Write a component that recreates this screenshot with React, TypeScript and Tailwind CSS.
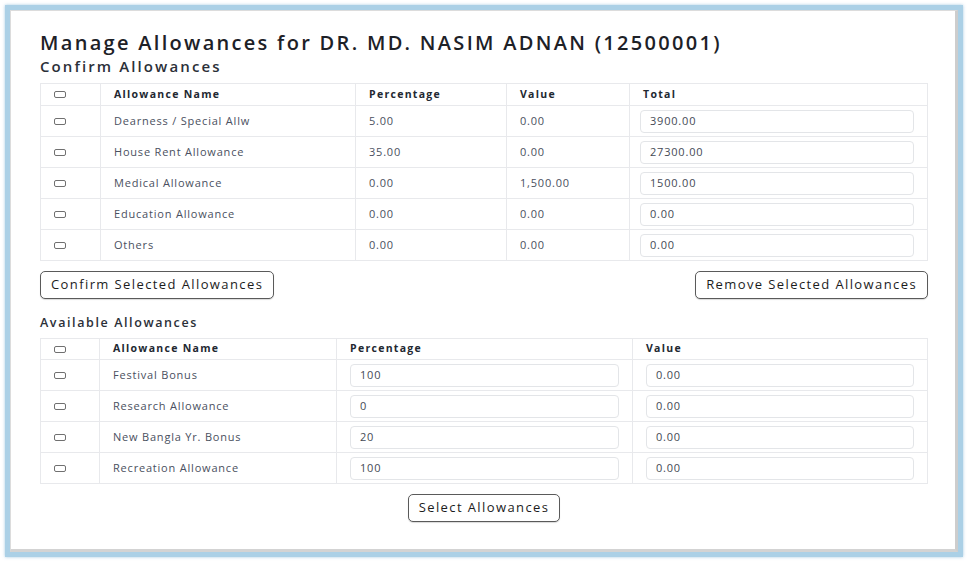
import React from 'react';

type Confirmed = { name: string; pct: string; value: string; total: string };
type Available = { name: string; pct: string; value: string };

const confirmed: Confirmed[] = [
  { name: 'Dearness / Special Allw', pct: '5.00', value: '0.00', total: '3900.00' },
  { name: 'House Rent Allowance', pct: '35.00', value: '0.00', total: '27300.00' },
  { name: 'Medical Allowance', pct: '0.00', value: '1,500.00', total: '1500.00' },
  { name: 'Education Allowance', pct: '0.00', value: '0.00', total: '0.00' },
  { name: 'Others', pct: '0.00', value: '0.00', total: '0.00' },
];

const available: Available[] = [
  { name: 'Festival Bonus', pct: '100', value: '0.00' },
  { name: 'Research Allowance', pct: '0', value: '0.00' },
  { name: 'New Bangla Yr. Bonus', pct: '20', value: '0.00' },
  { name: 'Recreation Allowance', pct: '100', value: '0.00' },
];

// 小さい横長のチェックボックス
const Check = () => (
  <div className="w-[12px] h-[7px] border border-[#707070] rounded-[2px] bg-white" />
);

const Field = ({ value }: { value: string }) => (
  <div className="h-[23px] border border-[#e3e5e8] rounded-[4px] bg-white px-[9px] flex items-center text-[11px] tracking-[0.8px] text-[#454a55]">
    {value}
  </div>
);

const Btn = ({ label }: { label: string }) => (
  <button className="h-[28px] border border-[#5a5a5a] rounded-[5px] bg-white px-[10px] text-[13px] tracking-[1.4px] text-[#1c1c1c] shadow-[0_1px_1px_rgba(0,0,0,0.15)]">
    {label}
  </button>
);

const th = 'border border-[#e8e9ec] text-left font-bold text-[10.5px] tracking-[1.3px] text-[#222831] px-[13px]';
const td = 'border border-[#e8e9ec] text-[11px] tracking-[0.8px] text-[#4a5060] px-[13px]';

export default function App() {
  return (
    <div className="w-[971px] h-[564px] bg-white pt-[5px] pl-[5px]" style={{ fontFamily: '"Open Sans", "Noto Sans", sans-serif' }}>
      <div className="w-[958px] h-[552px] border-[5px] border-[#abd0e6] shadow-[0_0_3px_rgba(130,180,215,0.7)]">
        <div className="h-full bg-white border-t border-l border-[#dcdcdc] border-r-[3px] border-b-[3px] border-r-[#cdcdcd] border-b-[#d3d3d3] pl-[29px] pt-[18px]">
          <h1 className="text-[20px] leading-[28px] font-semibold tracking-[2.3px] text-[#1d2127]">
            Manage Allowances for DR. MD. NASIM ADNAN (12500001)
          </h1>
          <h2 className="text-[15px] leading-[20px] font-semibold tracking-[2.1px] text-[#2b3038] mt-[-1px]">Confirm Allowances</h2>

          <table className="w-[888px] border-collapse mt-[7px]">
            <colgroup>
              <col className="w-[60px]" />
              <col className="w-[255px]" />
              <col className="w-[151px]" />
              <col className="w-[123px]" />
              <col />
            </colgroup>
            <thead>
              <tr className="h-[22px]">
                <th className={th}><Check /></th>
                <th className={th}>Allowance Name</th>
                <th className={th}>Percentage</th>
                <th className={th}>Value</th>
                <th className={th}>Total</th>
              </tr>
            </thead>
            <tbody>
              {confirmed.map(r => (
                <tr key={r.name} className="h-[31px]">
                  <td className={td}><Check /></td>
                  <td className={td}>{r.name}</td>
                  <td className={td}>{r.pct}</td>
                  <td className={td}>{r.value}</td>
                  <td className="border border-[#e8e9ec] pl-[10px] pr-[13px]"><Field value={r.total} /></td>
                </tr>
              ))}
            </tbody>
          </table>

          <div className="w-[888px] flex justify-between mt-[10px]">
            <Btn label="Confirm Selected Allowances" />
            <Btn label="Remove Selected Allowances" />
          </div>

          <h2 className="text-[12.5px] leading-[20px] font-semibold tracking-[1.6px] text-[#2b3038] mt-[14px]">Available Allowances</h2>

          <table className="w-[888px] border-collapse mt-[5px]">
            <colgroup>
              <col className="w-[59px]" />
              <col className="w-[237px]" />
              <col className="w-[296px]" />
              <col />
            </colgroup>
            <thead>
              <tr className="h-[21px]">
                <th className={th}><Check /></th>
                <th className={th}>Allowance Name</th>
                <th className={th}>Percentage</th>
                <th className={th}>Value</th>
              </tr>
            </thead>
            <tbody>
              {available.map(r => (
                <tr key={r.name} className="h-[31px]">
                  <td className={td}><Check /></td>
                  <td className={td}>{r.name}</td>
                  <td className="border border-[#e8e9ec] px-[13px]"><Field value={r.pct} /></td>
                  <td className="border border-[#e8e9ec] px-[13px]"><Field value={r.value} /></td>
                </tr>
              ))}
            </tbody>
          </table>

          <div className="w-[888px] flex justify-center mt-[10px]">
            <Btn label="Select Allowances" />
          </div>
        </div>
      </div>
    </div>
  );
}
